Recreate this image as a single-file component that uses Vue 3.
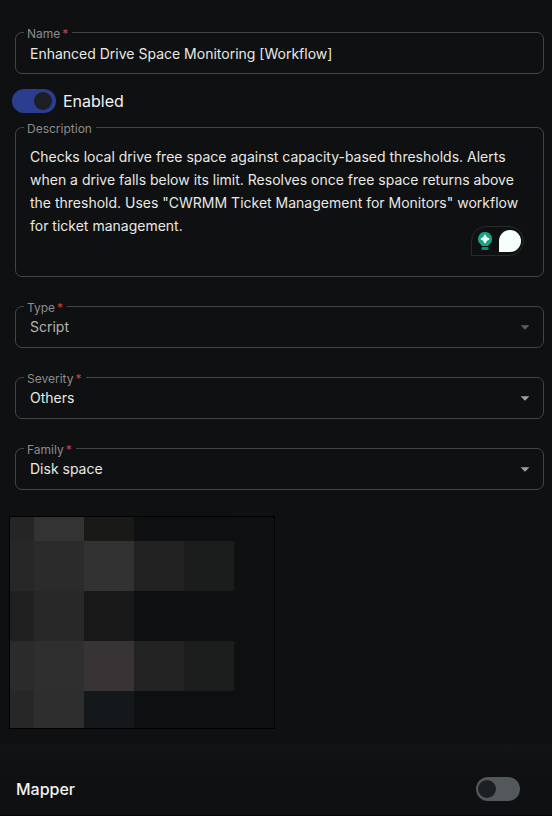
<script setup>
import { ref } from 'vue'

const name = ref('Enhanced Drive Space Monitoring [Workflow]')
const enabled = ref(true)
const description = ref(
  'Checks local drive free space against capacity-based thresholds. Alerts when a drive falls below its limit. Resolves once free space returns above the threshold. Uses "CWRMM Ticket Management for Monitors" workflow for ticket management.'
)
const mapper = ref(false)

const selects = ref([
  { id: 'type', label: 'Type', value: 'Script', disabled: true },
  { id: 'severity', label: 'Severity', value: 'Others', disabled: false },
  { id: 'family', label: 'Family', value: 'Disk space', disabled: false }
])

const tiles = [
  '#252525', '#333333', '#191918', '#0e0f10', '#0e0f10', '#0f1011',
  '#272727', '#2b2b2b', '#323232', '#212121', '#1b1d1c', '#0f1011',
  '#202020', '#282828', '#181818', '#0e0f10', '#0e0f10', '#0f1011',
  '#2b2b2b', '#2f2f2f', '#383435', '#232323', '#1c1e1d', '#0f1011',
  '#272727', '#2e2e2e', '#15181a', '#0e0f10', '#0e0f10', '#0f1011'
]
</script>

<template>
  <main class="panel">
    <form class="form" @submit.prevent>
      <div class="field">
        <label class="field-label" for="name">Name<span class="required">*</span></label>
        <input id="name" v-model="name" class="control" type="text" required />
      </div>

      <label class="toggle-row">
        <input v-model="enabled" class="switch" type="checkbox" role="switch" />
        <span>Enabled</span>
      </label>

      <div class="field">
        <label class="field-label" for="description">Description</label>
        <textarea id="description" v-model="description" class="control area" spellcheck="false"></textarea>
        <div class="assistant">
          <svg width="16" height="20" viewBox="0 0 16 20" aria-hidden="true">
            <path fill="#12a588" d="M8 1a7 7 0 0 1 4.8 12.1c-.7.6-1.3 1-1.3 1.9h-7c0-.9-.6-1.3-1.3-1.9A7 7 0 0 1 8 1z" />
            <rect x="4.500" y="16" width="7" height="3" rx="1" fill="#0f8f78" />
            <path fill="#ffffff" d="M8 3.800Q8.900 7.100 12.200 8Q8.900 8.900 8 12.200Q7.100 8.900 3.800 8Q7.100 7.100 8 3.800z" stroke="#ffffff" stroke-width="1" stroke-linejoin="round" />
          </svg>
          <span class="bubble"></span>
        </div>
      </div>

      <div v-for="item in selects" :key="item.id" class="field select-field">
        <label class="field-label" :for="item.id">{{ item.label }}<span class="required">*</span></label>
        <select :id="item.id" v-model="item.value" class="control" :disabled="item.disabled">
          <option>{{ item.value }}</option>
        </select>
        <svg class="caret" :class="{ dim: item.disabled }" width="10" height="5" viewBox="0 0 10 5" aria-hidden="true">
          <path d="M.6.200h8.800L5 4.800z" />
        </svg>
      </div>
    </form>

    <div class="mosaic" aria-hidden="true">
      <span v-for="(tile, i) in tiles" :key="i" :style="{ background: tile }"></span>
    </div>

    <section class="mapper">
      <label class="mapper-row">
        <span>Mapper</span>
        <input v-model="mapper" class="switch" type="checkbox" role="switch" />
      </label>
    </section>
  </main>
</template>

<style>
body {
  background: #0f1011;
}
</style>

<style scoped>
.panel {
  font-family: Inter, "Liberation Sans", sans-serif;
  color: #f2f2f2;
  background: #0f1011;
}

.form {
  display: flex;
  flex-direction: column;
  padding: 32px 8px 0 15px;
}

.field {
  position: relative;
  display: flex;
  border: 1px solid #434445;
  border-radius: 7px;
}

.field-label {
  position: absolute;
  top: -7px;
  left: 8px;
  padding: 0 4px 0 3px;
  font-size: 12px;
  line-height: 16px;
  color: #8c8c8c;
  background: #0f1011;
}

.required {
  margin-left: 2px;
  color: #c8404c;
}

.control {
  flex: 1;
  min-width: 0;
  box-sizing: border-box;
  height: 40px;
  margin: 0;
  padding: 0 14px;
  border: 0;
  border-radius: 7px;
  outline: 0;
  appearance: none;
  background: transparent;
  font: inherit;
  font-size: 14px;
  line-height: 23px;
  color: #e8e8e4;
}

.area {
  height: 148px;
  padding: 17px 14px;
  resize: none;
}

.toggle-row {
  display: flex;
  align-items: center;
  align-self: flex-start;
  gap: 7px;
  margin: 15px 0 14px -3px;
  font-size: 16px;
  line-height: 24px;
}

.switch {
  flex: none;
  display: flex;
  align-items: center;
  box-sizing: border-box;
  width: 44px;
  height: 24px;
  margin: 0;
  padding: 0 2px;
  appearance: none;
  border-radius: 12px;
  background: #53585b;
}

.switch::before {
  content: "";
  width: 18px;
  height: 18px;
  border-radius: 50%;
  background: #1c2023;
}

.switch:checked {
  justify-content: flex-end;
  padding: 0 4px;
  background: #2a3d8f;
}

.assistant {
  position: absolute;
  right: 19px;
  bottom: 20px;
  display: flex;
  align-items: center;
  gap: 6px;
  box-sizing: border-box;
  height: 30px;
  padding: 0 2px 0 5px;
  border: 1px solid #262b2b;
  border-radius: 15px 15px 15px 0;
  background: #0f1011;
}

.bubble {
  width: 22px;
  height: 22px;
  border-radius: 11px 11px 11px 0;
  background: #f6fffc;
}

.select-field {
  align-items: center;
  margin-top: 29px;
}

.select-field .control {
  padding-bottom: 2px;
}

.control:disabled {
  color: #b4b4b0;
  opacity: 1;
}

.caret {
  position: absolute;
  right: 13px;
  fill: #a0a0a0;
  pointer-events: none;
}

.caret.dim {
  fill: #5c5d5e;
}

.mosaic {
  display: inline-grid;
  grid-template-columns: 24px repeat(4, 50px) 40px;
  grid-template-rows: 24px repeat(3, 50px) 37px;
  margin: 26px 0 0 9px;
  border: 1px solid #000000;
  vertical-align: top;
}

.mapper {
  margin-top: 15px;
  padding: 33px 32px 14px 16px;
  border-bottom: 1px solid #050303;
  background: linear-gradient(#131415, #0f1011 28px);
}

.mapper-row {
  display: flex;
  align-items: center;
  justify-content: space-between;
  font-size: 16px;
  font-weight: 500;
  line-height: 24px;
}
</style>
